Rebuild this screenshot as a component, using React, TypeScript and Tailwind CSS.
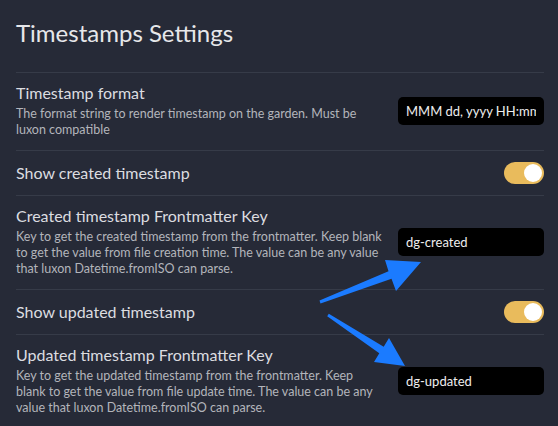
import { useState } from 'react'

type TextRow = {
  kind: 'text'
  name: string
  desc: string[]
  value: string
}

type ToggleRow = {
  kind: 'toggle'
  name: string
}

const rows: (TextRow | ToggleRow)[] = [
  {
    kind: 'text',
    name: 'Timestamp format',
    desc: ['The format string to render timestamp on the garden. Must be', 'luxon compatible'],
    value: 'MMM dd, yyyy HH:mm',
  },
  { kind: 'toggle', name: 'Show created timestamp' },
  {
    kind: 'text',
    name: 'Created timestamp Frontmatter Key',
    desc: [
      'Key to get the created timestamp from the frontmatter. Keep blank',
      'to get the value from file creation time. The value can be any value',
      'that luxon Datetime.fromISO can parse.',
    ],
    value: 'dg-created',
  },
  { kind: 'toggle', name: 'Show updated timestamp' },
  {
    kind: 'text',
    name: 'Updated timestamp Frontmatter Key',
    desc: [
      'Key to get the updated timestamp from the frontmatter. Keep',
      'blank to get the value from file update time. The value can be any',
      'value that luxon Datetime.fromISO can parse.',
    ],
    value: 'dg-updated',
  },
]

function Toggle() {
  const [on, setOn] = useState(true)
  return (
    <button
      onClick={() => setOn(!on)}
      className={`relative h-[22px] w-[40px] shrink-0 rounded-full ${on ? 'bg-[#e9bb5c]' : 'bg-[#4a4f5c]'}`}
    >
      <span
        className={`absolute top-[2px] h-[18px] w-[18px] rounded-full bg-white ${on ? 'right-[2px]' : 'left-[2px]'}`}
      />
    </button>
  )
}

// the two blue annotation arrows pointing at the frontmatter key inputs
function Arrows() {
  return (
    <svg className="pointer-events-none absolute left-0 top-0" width="558" height="426">
      <polygon
        fill="#1b7bff"
        points="319.5,300.6 388.5,271.3 385,260 421,262 396,291 391.5,278.7 320.5,303.4"
      />
      <polygon
        fill="#1b7bff"
        points="328.8,313.7 383.7,346.7 389,338 405,366 374,362 379.3,353.3 327.2,316.3"
      />
    </svg>
  )
}

export default function App() {
  return (
    <div
      className="relative h-[426px] w-[558px] overflow-hidden bg-[#262a37] pl-4 pr-[14px] pt-[18px]"
      style={{ fontFamily: 'Lato, "Noto Sans", sans-serif' }}
    >
      <h1 className="mb-[24px] h-[30px] text-[24px] leading-[30px] text-[#e6e7ea]">Timestamps Settings</h1>
      {rows.map((row) =>
        row.kind === 'toggle' ? (
          <div
            key={row.name}
            className="flex items-center justify-between border-t border-[#363b48] py-[11px]"
          >
            <div className="text-[16px] leading-[20px] text-[#dcdde0]">{row.name}</div>
            <Toggle />
          </div>
        ) : (
          <div
            key={row.name}
            className="flex items-center justify-between border-t border-[#363b48] pb-[12px] pt-[10px]"
          >
            <div>
              <div className="text-[16px] leading-[20px] text-[#dcdde0]">{row.name}</div>
              <div className="mt-[3px] text-[12.5px] leading-[16px] text-[#b3b5bb]">
                {row.desc.map((line) => (
                  <div key={line} className="whitespace-nowrap">
                    {line}
                  </div>
                ))}
              </div>
            </div>
            <input
              defaultValue={row.value}
              className="h-[28px] w-[146px] shrink-0 rounded-[5px] bg-black px-2 text-[13px] text-[#eeeeee] outline-none"
            />
          </div>
        ),
      )}
      <Arrows />
    </div>
  )
}
